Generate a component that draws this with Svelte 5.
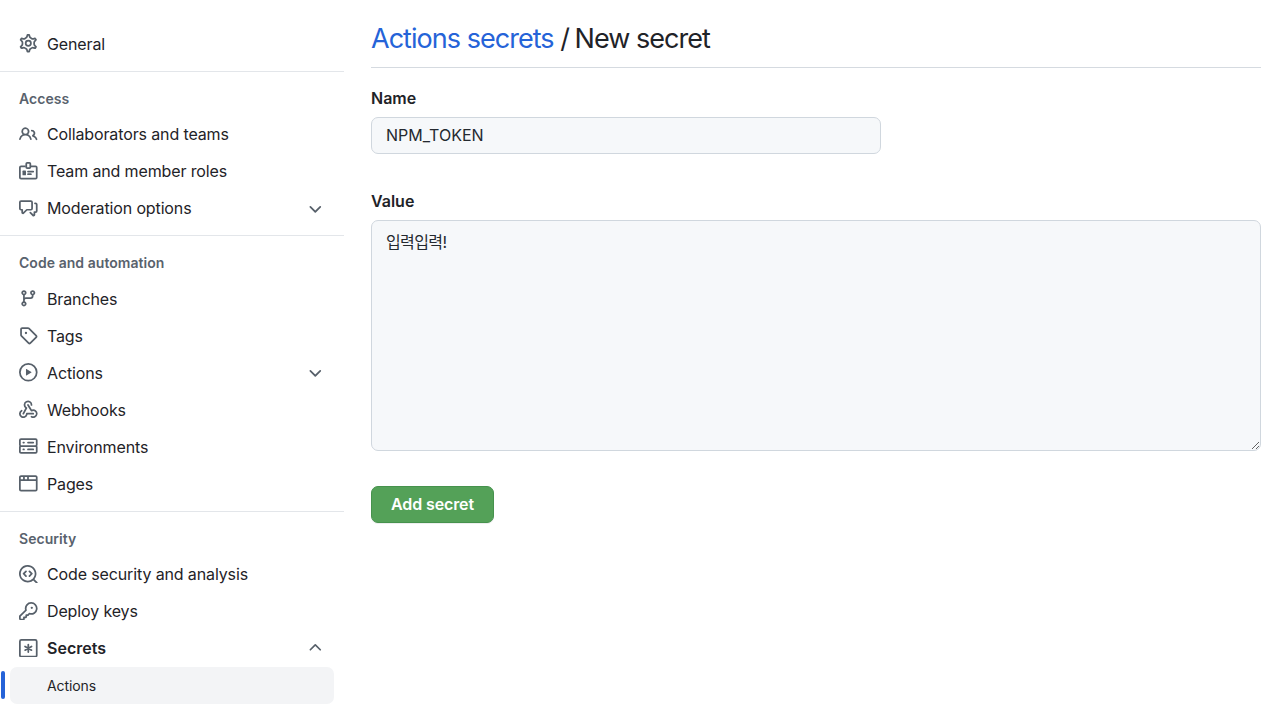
<script>
  const icons = {
    people: 'M5.5 3.5a2 2 0 100 4 2 2 0 000-4zM2 5.5a3.5 3.5 0 115.898 2.549 5.507 5.507 0 013.034 4.084.75.75 0 11-1.482.235 4.001 4.001 0 00-7.9 0 .75.75 0 01-1.482-.236A5.507 5.507 0 013.102 8.05 3.49 3.49 0 012 5.5zM11 4a.75.75 0 100 1.5 1.5 1.5 0 01.666 2.844.75.75 0 00-.416.672v.352a.75.75 0 00.574.73c1.2.289 2.162 1.2 2.522 2.372a.75.75 0 101.434-.44 5.01 5.01 0 00-2.56-3.012A3 3 0 0011 4z',
    discussion: 'M1.5 2.75a.25.25 0 01.25-.25h8.5a.25.25 0 01.25.25v5.5a.25.25 0 01-.25.25h-3.5a.75.75 0 00-.53.22L3.5 11.44V9.25a.75.75 0 00-.75-.75h-1a.25.25 0 01-.25-.25v-5.5zM1.75 1A1.75 1.75 0 000 2.75v5.5C0 9.216.784 10 1.75 10H2v1.543a1.457 1.457 0 002.487 1.03L7.061 10h3.189A1.75 1.75 0 0012 8.25v-5.5A1.75 1.75 0 0010.25 1h-8.5zM14.5 4.75a.25.25 0 00-.25-.25h-.5a.75.75 0 110-1.5h.5c.966 0 1.75.784 1.75 1.75v5.5A1.75 1.75 0 0114.25 12H14v1.543a1.457 1.457 0 01-2.487 1.03L9.22 12.28a.75.75 0 111.06-1.06l2.22 2.22v-2.19a.75.75 0 01.75-.75h1a.25.25 0 00.25-.25v-5.5z',
    branch: 'M11.75 2.5a.75.75 0 100 1.5.75.75 0 000-1.5zm-2.25.75a2.25 2.25 0 113 2.122V6A2.5 2.5 0 0110 8.5H6a1 1 0 00-1 1v1.128a2.251 2.251 0 11-1.5 0V5.372a2.25 2.25 0 111.5 0v1.836A2.492 2.492 0 016 7h4a1 1 0 001-1v-.628A2.25 2.25 0 019.5 3.25zM4.25 12a.75.75 0 100 1.5.75.75 0 000-1.5zM3.5 3.25a.75.75 0 111.5 0 .75.75 0 01-1.5 0z',
    tag: 'M2.5 7.775V2.75a.25.25 0 01.25-.25h5.025a.25.25 0 01.177.073l6.25 6.25a.25.25 0 010 .354l-5.025 5.025a.25.25 0 01-.354 0l-6.25-6.25a.25.25 0 01-.073-.177zm-1.5 0V2.75C1 1.784 1.784 1 2.75 1h5.025c.464 0 .91.184 1.238.513l6.25 6.25a1.75 1.75 0 010 2.474l-5.026 5.026a1.75 1.75 0 01-2.474 0l-6.25-6.25A1.75 1.75 0 011 7.775zM6 5a1 1 0 100 2 1 1 0 000-2z',
    play: 'M1.5 8a6.5 6.5 0 1113 0 6.5 6.5 0 01-13 0zM8 0a8 8 0 100 16A8 8 0 008 0zM6.379 5.227A.25.25 0 006 5.442v5.117a.25.25 0 00.379.214l4.264-2.559a.25.25 0 000-.428L6.379 5.227z',
    server: 'M1.75 1A1.75 1.75 0 000 2.75v4c0 .372.116.717.314 1a1.742 1.742 0 00-.314 1v4c0 .966.784 1.75 1.75 1.75h12.5A1.75 1.75 0 0016 12.75v-4c0-.372-.116-.717-.314-1 .198-.283.314-.628.314-1v-4A1.75 1.75 0 0014.25 1H1.75zm0 7.5a.25.25 0 00-.25.25v4c0 .138.112.25.25.25h12.5a.25.25 0 00.25-.25v-4a.25.25 0 00-.25-.25H1.75zM1.5 2.75a.25.25 0 01.25-.25h12.5a.25.25 0 01.25.25v4a.25.25 0 01-.25.25H1.75a.25.25 0 01-.25-.25v-4zm5.5 2A.75.75 0 017.75 4h4.5a.75.75 0 010 1.5h-4.5A.75.75 0 017 4.75zM7.75 10a.75.75 0 000 1.5h4.5a.75.75 0 000-1.5h-4.5zM3 4.75A.75.75 0 013.75 4h.5a.75.75 0 010 1.5h-.5A.75.75 0 013 4.75zM3.75 10a.75.75 0 000 1.5h.5a.75.75 0 000-1.5h-.5z',
    browser: 'M0 2.75C0 1.784.784 1 1.75 1h12.5c.966 0 1.75.784 1.75 1.75v10.5A1.75 1.75 0 0114.25 15H1.75A1.75 1.75 0 010 13.25V2.75zm1.75-.25a.25.25 0 00-.25.25V4.5h2v-2H1.75zM5 2.5v2h2v-2H5zm3.5 0v2h6V2.75a.25.25 0 00-.25-.25H8.5zm6 3.5h-13v7.25c0 .138.112.25.25.25h12.5a.25.25 0 00.25-.25V6z',
    codescan: 'M8.47 4.97a.75.75 0 000 1.06L9.94 7.5 8.47 8.97a.75.75 0 101.06 1.06l2-2a.75.75 0 000-1.06l-2-2a.75.75 0 00-1.06 0zM6.53 6.03a.75.75 0 00-1.06-1.06l-2 2a.75.75 0 000 1.06l2 2a.75.75 0 101.06-1.06L5.06 7.5l1.47-1.47zM12.246 13.307a7.5 7.5 0 111.06-1.06l2.474 2.473a.75.75 0 11-1.06 1.06l-2.474-2.473zM1.5 7.5a6 6 0 1110.386 4.094.75.75 0 00-.292.293A6 6 0 011.5 7.5z',
    key: 'M6.5 5.5a4 4 0 112.731 3.795.75.75 0 00-.768.18L7.44 10.5H6.25a.75.75 0 00-.75.75v1.19l-.06.06H4.25a.75.75 0 00-.75.75v1.19l-.06.06H1.75a.25.25 0 01-.25-.25v-1.69l5.024-5.023a.75.75 0 00.181-.768A3.995 3.995 0 016.5 5.5zm4-5.5a5.5 5.5 0 00-5.348 6.788L.22 11.72a.75.75 0 00-.22.53v2C0 15.216.784 16 1.75 16h2a.75.75 0 00.53-.22l.5-.5a.75.75 0 00.22-.53V14h.75a.75.75 0 00.53-.22l.5-.5a.75.75 0 00.22-.53V12h.75a.75.75 0 00.53-.22l.932-.932A5.5 5.5 0 1010.5 0zm.5 6a1 1 0 100-2 1 1 0 000 2z',
  };
  const gear = 'M7.429 1.525a6.593 6.593 0 011.142 0c.036.003.108.036.137.146l.289 1.105c.147.56.55.967.997 1.189.174.086.341.183.501.29.417.278.97.423 1.53.27l1.102-.303c.11-.03.175.016.195.046.219.31.41.641.573.989.014.031.022.11-.059.19l-.815.806c-.411.406-.562.957-.53 1.456a4.588 4.588 0 010 .582c-.032.499.119 1.05.53 1.456l.815.806c.08.08.073.159.059.19a6.494 6.494 0 01-.573.99c-.02.029-.086.074-.195.045l-1.103-.303c-.559-.153-1.112-.008-1.529.27-.16.107-.327.204-.5.29-.449.222-.851.628-.998 1.189l-.289 1.105c-.029.11-.101.143-.137.146a6.613 6.613 0 01-1.142 0c-.036-.003-.108-.037-.137-.146l-.289-1.105c-.147-.56-.55-.967-.997-1.189a4.502 4.502 0 01-.501-.29c-.417-.278-.97-.423-1.53-.27l-1.102.303c-.11.03-.175-.016-.195-.046a6.492 6.492 0 01-.573-.989c-.014-.031-.022-.11.059-.19l.815-.806c.411-.406.562-.957.53-1.456a4.587 4.587 0 010-.582c.032-.499-.119-1.05-.53-1.456l-.815-.806c-.08-.08-.073-.159-.059-.19a6.44 6.44 0 01.573-.99c.02-.029.086-.075.195-.045l1.103.303c.559.153 1.112.008 1.529-.27.16-.107.327-.204.5-.29.449-.222.851-.628.998-1.189l.289-1.105c.029-.11.101-.143.137-.146z';
  const webhook = [
    'M5.5 4.25a2.25 2.25 0 014.5 0 .75.75 0 001.5 0 3.75 3.75 0 10-6.14 2.889l-2.272 4.258a.75.75 0 001.324.706L7 7.25a.75.75 0 00-.309-1.015A2.25 2.25 0 015.5 4.25z',
    'M7.364 3.607a.75.75 0 011.03.257l2.608 4.349a3.75 3.75 0 11-.628 6.785.75.75 0 01.752-1.299 2.25 2.25 0 10-.033-3.88.75.75 0 01-1.03-.256L7.107 4.636a.75.75 0 01.257-1.03z',
    'M2.9 8.776A.75.75 0 012.625 9.8 2.25 2.25 0 106 11.75a.75.75 0 01.75-.751h5.5a.75.75 0 010 1.5H7.425a3.751 3.751 0 11-5.55-3.998.75.75 0 011.024.274z',
  ];

  const groups = [
    { items: [{ label: 'General', icon: 'gear' }] },
    {
      title: 'Access',
      items: [
        { label: 'Collaborators and teams', icon: 'people' },
        { label: 'Team and member roles', icon: 'badge' },
        { label: 'Moderation options', icon: 'discussion', chevron: 'down' },
      ],
    },
    {
      title: 'Code and automation',
      items: [
        { label: 'Branches', icon: 'branch' },
        { label: 'Tags', icon: 'tag' },
        { label: 'Actions', icon: 'play', chevron: 'down' },
        { label: 'Webhooks', icon: 'webhook' },
        { label: 'Environments', icon: 'server' },
        { label: 'Pages', icon: 'browser' },
      ],
    },
    {
      title: 'Security',
      items: [
        { label: 'Code security and analysis', icon: 'codescan' },
        { label: 'Deploy keys', icon: 'key' },
        { label: 'Secrets', icon: 'asterisk', chevron: 'up', open: true, children: ['Actions'] },
      ],
    },
  ];

  let name = $state('NPM_TOKEN');
  let value = $state('입력입력!');
</script>

{#snippet glyph(kind)}
  <svg class="icon" viewBox="0 0 16 16" aria-hidden="true">
    {#if kind === 'gear'}
      <g class="line">
        <path transform="translate(8 8) scale(1.115) translate(-8 -8)" stroke-width="1.345" d={gear} />
        <circle cx="8" cy="8" r="2.25" />
      </g>
    {:else if kind === 'badge'}
      <g class="line">
        <path d="M5.75 3.75h-4a1 1 0 0 0-1 1v8.5a1 1 0 0 0 1 1h12.5a1 1 0 0 0 1-1v-8.5a1 1 0 0 0-1-1h-4" />
        <rect x="6.25" y=".75" width="3.5" height="4.5" rx=".8" />
        <path stroke-linecap="round" d="M7.75 8.25h4.5M7.75 10.5h2.5" />
      </g>
      <rect x="3" y="7.4" width="3" height="4" rx=".5" />
    {:else if kind === 'asterisk'}
      <g class="line">
        <rect x=".75" y=".75" width="14.5" height="14.5" rx="1.3" />
        <path stroke-linecap="round" d="M8 4.75v6.5M5.2 6.4l5.6 3.2M10.8 6.4L5.2 9.6" />
      </g>
    {:else if kind === 'webhook'}
      {#each webhook as d}<path {d} />{/each}
    {:else}
      <path fill-rule="evenodd" d={icons[kind]} />
    {/if}
  </svg>
{/snippet}

<div class="page">
  <nav class="sidebar">
    {#each groups as group}
      <section>
        {#if group.title}<h2>{group.title}</h2>{/if}
        <ul>
          {#each group.items as item}
            <li>
              <a class="item" class:open={item.open} href="#settings">
                {@render glyph(item.icon)}
                <span>{item.label}</span>
                {#if item.chevron}
                  <svg class="chevron" class:up={item.chevron === 'up'} viewBox="0 0 16 16" aria-hidden="true">
                    <path d="M12.78 6.22a.75.75 0 010 1.06l-4.25 4.25a.75.75 0 01-1.06 0L3.22 7.28a.75.75 0 011.06-1.06L8 9.94l3.72-3.72a.75.75 0 011.06 0z" />
                  </svg>
                {/if}
              </a>
              {#each item.children ?? [] as child}
                <a class="child" href="#settings">{child}</a>
              {/each}
            </li>
          {/each}
        </ul>
      </section>
    {/each}
  </nav>

  <main>
    <h1><a href="#secrets">Actions secrets</a> <span class="slash">/</span> New secret</h1>
    <form>
      <label for="name">Name</label>
      <input id="name" bind:value={name} spellcheck="false" />
      <label for="value">Value</label>
      <textarea id="value" bind:value spellcheck="false"></textarea>
      <button type="button">Add secret</button>
    </form>
  </main>
</div>

<style>
  :global(body) {
    background: #fff;
  }
  .page {
    display: grid;
    grid-template-columns: 344px 890px;
    column-gap: 27px;
    height: 706px;
    overflow: hidden;
    color: #1f2328;
    font-family: Inter, 'Noto Sans CJK KR', sans-serif;
    font-size: 16px;
  }
  a {
    color: inherit;
    text-decoration: none;
  }
  ul {
    list-style: none;
    margin: 0;
    padding: 0;
  }
  section {
    box-sizing: border-box;
    padding-bottom: 8.75px;
  }
  section:first-child {
    padding-top: 25.15px;
  }
  section + section {
    border-top: 1px solid #e3e6ea;
    padding-top: 8px;
  }
  h2 {
    margin: 0;
    padding-left: 19px;
    height: 35.75px;
    line-height: 37px;
    font-size: 14px;
    font-weight: 600;
    letter-spacing: 0.05px;
    color: #59626d;
  }
  .item {
    display: flex;
    align-items: center;
    height: 37px;
    padding: 0 19.1px 0 19px;
    line-height: 24px;
    letter-spacing: -0.13px;
  }
  .item span {
    flex: 1;
    margin-left: 9.4px;
  }
  .open {
    font-weight: 600;
    letter-spacing: 0.03px;
  }
  .icon,
  .chevron {
    flex: none;
    width: 18.6px;
    height: 18.6px;
    fill: #57606a;
  }
  .line {
    fill: none;
    stroke: #57606a;
    stroke-width: 1.5;
  }
  .up {
    transform: scaleY(-1);
  }
  .child {
    position: relative;
    display: block;
    height: 37px;
    margin: 0 10px 0 10px;
    padding-left: 37px;
    border-radius: 7px;
    background: #f3f4f6;
    font-size: 14px;
    line-height: 37px;
    letter-spacing: -0.1px;
  }
  .child::before {
    content: '';
    position: absolute;
    left: -9.5px;
    top: 4.5px;
    width: 4.6px;
    height: 28px;
    border-radius: 3px;
    background: #2563d8;
  }
  h1 {
    box-sizing: border-box;
    height: 68px;
    margin: 0;
    padding-top: 20px;
    border-bottom: 1px solid #d5dae0;
    font-size: 27px;
    line-height: 37px;
    font-weight: 400;
    letter-spacing: -0.97px;
  }
  h1 a {
    color: #2563d8;
  }
  .slash {
    margin: 0 -1px 0 0;
  }
  form {
    display: flex;
    flex-direction: column;
    align-items: flex-start;
  }
  label {
    font-weight: 600;
    line-height: 24px;
    margin: 18px 0 7px;
  }
  input,
  textarea {
    box-sizing: border-box;
    border: 1px solid #d0d7de;
    border-radius: 7px;
    background: #f6f8fa;
    color: #24292f;
    font: inherit;
    line-height: 24px;
    outline: none;
  }
  input {
    width: 510px;
    height: 37px;
    padding: 0 14px 1px;
    margin-bottom: 17px;
  }
  textarea {
    width: 890px;
    height: 231px;
    padding: 9px 14px;
    resize: vertical;
    display: block;
    letter-spacing: -0.6px;
  }
  button {
    width: 123px;
    height: 37px;
    margin-top: 35px;
    padding: 0 0 1px;
    border: 1px solid #46924d;
    border-radius: 7px;
    background: #54a158;
    color: #fff;
    font: 600 16px Inter, sans-serif;
    letter-spacing: -0.1px;
    box-shadow: 0 1px 0 rgba(31, 35, 40, 0.08);
  }
</style>
